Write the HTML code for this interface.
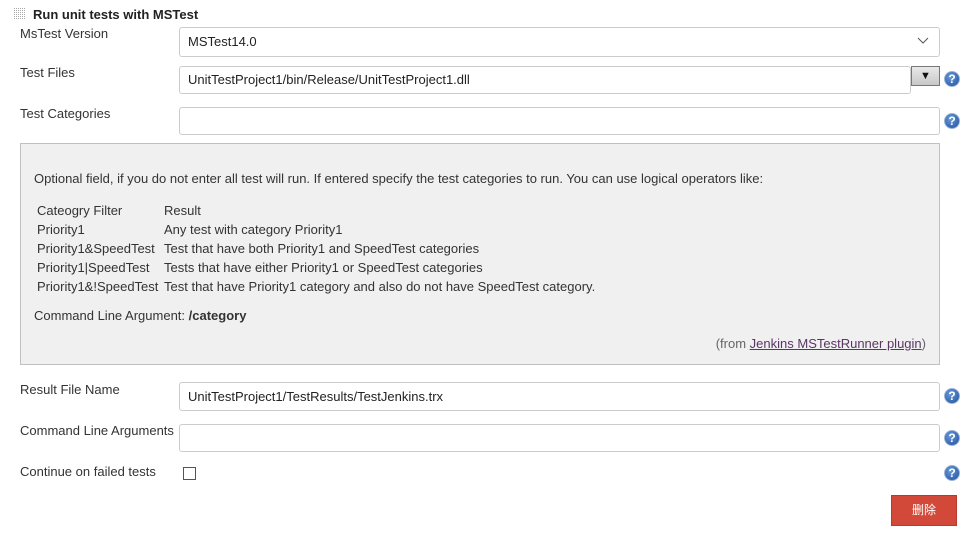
<!DOCTYPE html>
<html><head><meta charset="utf-8"><style>
body{margin:0;width:970px;height:540px;background:#fff;font-family:"Liberation Sans",Arial,sans-serif;font-size:13px;color:#333;position:relative;overflow:hidden}
.a{position:absolute;white-space:nowrap}
.in{position:absolute;border:1px solid #ccc;border-radius:3px;background:#fff;box-sizing:border-box;padding-left:8px;color:#222;font-size:13px;line-height:28px}
.h{position:absolute;width:16px;height:16px;border-radius:50%;background:radial-gradient(circle at 40% 35%,#6a9ad8,#1d4f9c);border:1px solid #9cb4d8;box-sizing:border-box;color:#fff;font-weight:bold;font-size:12px;line-height:14px;text-align:center}
</style></head><body>
<svg class="a" style="left:14px;top:8px" width="12" height="12"><defs><pattern id="p" width="2" height="2" patternUnits="userSpaceOnUse"><rect width="1" height="1" fill="#aaa"/></pattern></defs><rect width="12" height="12" fill="url(#p)"/></svg>
<div class="a" style="left:33px;top:7px;font-weight:bold;color:#222">Run unit tests with MSTest</div>
<div class="a" style="left:20px;top:26px">MsTest Version</div>
<div class="in" style="left:179px;top:27px;width:761px;height:30px">MSTest14.0</div>
<svg class="a" style="left:917px;top:37px" width="12" height="8"><path d="M1 1 L6 6 L11 1" fill="none" stroke="#555" stroke-width="1"/></svg>
<div class="a" style="left:20px;top:65px">Test Files</div>
<div class="in" style="left:179px;top:66px;width:732px;height:28px;line-height:26px">UnitTestProject1/bin/Release/UnitTestProject1.dll</div>
<div class="a" style="left:911px;top:66px;width:29px;height:20px;background:linear-gradient(#e8e8e8,#c8c8c8);border:1px solid #777;box-sizing:border-box;text-align:center;font-size:11px;line-height:18px;color:#111">▼</div>
<div class="h" style="left:944px;top:71px">?</div>
<div class="a" style="left:20px;top:106px">Test Categories</div>
<div class="in" style="left:179px;top:107px;width:761px;height:28px"></div>
<div class="h" style="left:944px;top:113px">?</div>
<div class="a" style="left:20px;top:143px;width:920px;height:222px;background:#f0f0f0;border:1px solid #c0c0c0;box-sizing:border-box;white-space:normal">
<div class="a" style="left:13px;top:27px">Optional field, if you do not enter all test will run. If entered specify the test categories to run. You can use logical operators like:</div>
<div class="a" style="left:16px;top:57px;line-height:19px">Cateogry Filter<br>Priority1<br>Priority1&amp;SpeedTest<br>Priority1|SpeedTest<br>Priority1&amp;!SpeedTest</div>
<div class="a" style="left:143px;top:57px;line-height:19px">Result<br>Any test with category Priority1<br>Test that have both Priority1 and SpeedTest categories<br>Tests that have either Priority1 or SpeedTest categories<br>Test that have Priority1 category and also do not have SpeedTest category.</div>
<div class="a" style="left:13px;top:164px">Command Line Argument: <b>/category</b></div>
<div class="a" style="right:13px;top:192px;color:#666">(from <span style="color:#5c3566;text-decoration:underline">Jenkins MSTestRunner plugin</span>)</div>
</div>
<div class="a" style="left:20px;top:382px">Result File Name</div>
<div class="in" style="left:179px;top:382px;width:761px;height:29px">UnitTestProject1/TestResults/TestJenkins.trx</div>
<div class="h" style="left:944px;top:388px">?</div>
<div class="a" style="left:20px;top:423px">Command Line Arguments</div>
<div class="in" style="left:179px;top:424px;width:761px;height:28px"></div>
<div class="h" style="left:944px;top:430px">?</div>
<div class="a" style="left:20px;top:464px">Continue on failed tests</div>
<div class="a" style="left:183px;top:467px;width:13px;height:13px;border:1px solid #555;box-sizing:border-box;background:#fff"></div>
<div class="h" style="left:944px;top:465px">?</div>
<div class="a" style="left:891px;top:495px;width:66px;height:31px;background:#d24939;border:1px solid #b83a2c;box-sizing:border-box;color:#fff;text-align:center;line-height:29px;font-size:12px;font-family:'Liberation Sans','Noto Sans CJK SC',sans-serif">删除</div>
</body></html>
